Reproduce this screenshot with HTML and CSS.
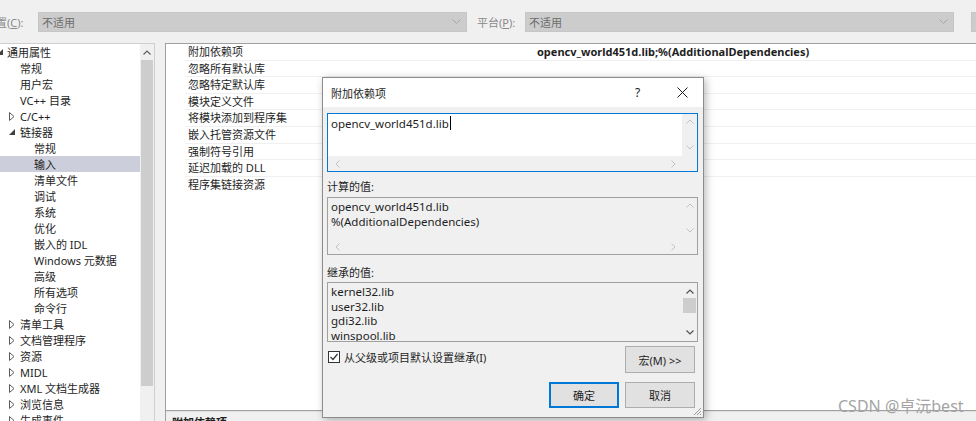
FILE: index.html
```html
<!DOCTYPE html>
<html>
<head>
<meta charset="utf-8">
<link rel="stylesheet" href="styles.css">
</head>
<body>
<div class="top">
  <span class="lbl lbl-cfg">置(<u>C</u>):</span>
  <div class="combo combo-cfg"><span>不适用</span><svg class="chev" width="9" height="5" viewBox="0 0 9 5"><polyline points="0.5,0.5 4.5,4.5 8.5,0.5" fill="none" stroke="#a6a6a6" stroke-width="1"/></svg></div>
  <span class="lbl lbl-plat">平台(<u>P</u>):</span>
  <div class="combo combo-plat"><span>不适用</span><svg class="chev" width="9" height="5" viewBox="0 0 9 5"><polyline points="0.5,0.5 4.5,4.5 8.5,0.5" fill="none" stroke="#a6a6a6" stroke-width="1"/></svg></div>
  <div class="topbtn"></div>
</div>

<div class="main">
  <div class="tree">
    <div class="tree-list">
      <div class="ti l0"><span class="exp exp0"><svg width="6" height="6" viewBox="0 0 6 6"><polygon points="6,0 6,6 0,6" fill="#404040"/></svg></span>通用属性</div>
      <div class="ti l1"><span class="exp"></span>常规</div>
      <div class="ti l1"><span class="exp"></span>用户宏</div>
      <div class="ti l1"><span class="exp"></span>VC++ 目录</div>
      <div class="ti l1"><span class="exp"><svg width="6" height="9" viewBox="0 0 6 9"><polygon points="0.5,0.5 5,4.5 0.5,8.5" fill="none" stroke="#5c5c5c" stroke-width="1"/></svg></span>C/C++</div>
      <div class="ti l1"><span class="exp"><svg width="6" height="6" viewBox="0 0 6 6"><polygon points="6,0 6,6 0,6" fill="#404040"/></svg></span>链接器</div>
      <div class="ti l2">常规</div>
      <div class="ti l2 sel">输入</div>
      <div class="ti l2">清单文件</div>
      <div class="ti l2">调试</div>
      <div class="ti l2">系统</div>
      <div class="ti l2">优化</div>
      <div class="ti l2">嵌入的 IDL</div>
      <div class="ti l2">Windows 元数据</div>
      <div class="ti l2">高级</div>
      <div class="ti l2">所有选项</div>
      <div class="ti l2">命令行</div>
      <div class="ti l1"><span class="exp"><svg width="6" height="9" viewBox="0 0 6 9"><polygon points="0.5,0.5 5,4.5 0.5,8.5" fill="none" stroke="#5c5c5c" stroke-width="1"/></svg></span>清单工具</div>
      <div class="ti l1"><span class="exp"><svg width="6" height="9" viewBox="0 0 6 9"><polygon points="0.5,0.5 5,4.5 0.5,8.5" fill="none" stroke="#5c5c5c" stroke-width="1"/></svg></span>文档管理程序</div>
      <div class="ti l1"><span class="exp"><svg width="6" height="9" viewBox="0 0 6 9"><polygon points="0.5,0.5 5,4.5 0.5,8.5" fill="none" stroke="#5c5c5c" stroke-width="1"/></svg></span>资源</div>
      <div class="ti l1"><span class="exp"><svg width="6" height="9" viewBox="0 0 6 9"><polygon points="0.5,0.5 5,4.5 0.5,8.5" fill="none" stroke="#5c5c5c" stroke-width="1"/></svg></span>MIDL</div>
      <div class="ti l1"><span class="exp"><svg width="6" height="9" viewBox="0 0 6 9"><polygon points="0.5,0.5 5,4.5 0.5,8.5" fill="none" stroke="#5c5c5c" stroke-width="1"/></svg></span>XML 文档生成器</div>
      <div class="ti l1"><span class="exp"><svg width="6" height="9" viewBox="0 0 6 9"><polygon points="0.5,0.5 5,4.5 0.5,8.5" fill="none" stroke="#5c5c5c" stroke-width="1"/></svg></span>浏览信息</div>
      <div class="ti l1"><span class="exp"><svg width="6" height="9" viewBox="0 0 6 9"><polygon points="0.5,0.5 5,4.5 0.5,8.5" fill="none" stroke="#5c5c5c" stroke-width="1"/></svg></span>生成事件</div>
    </div>
    <div class="tree-sb">
      <div class="sb-btn"><svg width="8" height="5" viewBox="0 0 8 5"><polyline points="0.5,4.5 4,1 7.5,4.5" fill="none" stroke="#606060" stroke-width="1.2"/></svg></div>
      <div class="sb-thumb"></div>
    </div>
  </div>

  <div class="grid">
    <div class="rows">
      <div class="row"><div class="gut"></div><div class="name">附加依赖项</div><div class="val bold">opencv_world451d.lib;%(AdditionalDependencies)</div></div>
      <div class="row"><div class="gut"></div><div class="name">忽略所有默认库</div><div class="val"></div></div>
      <div class="row"><div class="gut"></div><div class="name">忽略特定默认库</div><div class="val"></div></div>
      <div class="row"><div class="gut"></div><div class="name">模块定义文件</div><div class="val"></div></div>
      <div class="row"><div class="gut"></div><div class="name">将模块添加到程序集</div><div class="val"></div></div>
      <div class="row"><div class="gut"></div><div class="name">嵌入托管资源文件</div><div class="val"></div></div>
      <div class="row"><div class="gut"></div><div class="name">强制符号引用</div><div class="val"></div></div>
      <div class="row"><div class="gut"></div><div class="name">延迟加载的 DLL</div><div class="val"></div></div>
      <div class="row last"><div class="gut"></div><div class="name">程序集链接资源</div><div class="val"></div></div>
    </div>
    <div class="desc">附加依赖项</div>
  </div>
</div>

<div class="dlg">
  <div class="dlg-title">
    <span class="dlg-name">附加依赖项</span>
    <span class="help">?</span>
    <svg class="close" width="11" height="11" viewBox="0 0 11 11"><path d="M0.5,0.5 L10.5,10.5 M10.5,0.5 L0.5,10.5" stroke="#1a1a1a" stroke-width="1"/></svg>
  </div>
  <div class="dlg-body">
    <div class="box edit">
      <div class="box-text"><span>opencv_world451d.lib</span><span class="caret"></span></div>
      <div class="vsb">
        <svg width="8" height="5" viewBox="0 0 8 5"><polyline points="0.5,4.5 4,1 7.5,4.5" fill="none" stroke="#c2c2c2" stroke-width="1"/></svg>
        <svg width="8" height="5" viewBox="0 0 8 5"><polyline points="0.5,0.5 4,4 7.5,0.5" fill="none" stroke="#c2c2c2" stroke-width="1"/></svg>
      </div>
      <div class="hsb">
        <svg width="5" height="8" viewBox="0 0 5 8"><polyline points="4.5,0.5 1,4 4.5,7.5" fill="none" stroke="#c2c2c2" stroke-width="1"/></svg>
        <svg width="5" height="8" viewBox="0 0 5 8"><polyline points="0.5,0.5 4,4 0.5,7.5" fill="none" stroke="#c2c2c2" stroke-width="1"/></svg>
      </div>
      <div class="corner"></div>
    </div>

    <div class="glabel glabel1">计算的值:</div>
    <div class="box computed">
      <div class="box-text"><div>opencv_world451d.lib</div><div>%(AdditionalDependencies)</div></div>
      <div class="vsb">
        <svg width="8" height="5" viewBox="0 0 8 5"><polyline points="0.5,4.5 4,1 7.5,4.5" fill="none" stroke="#c2c2c2" stroke-width="1"/></svg>
        <svg width="8" height="5" viewBox="0 0 8 5"><polyline points="0.5,0.5 4,4 7.5,0.5" fill="none" stroke="#c2c2c2" stroke-width="1"/></svg>
      </div>
      <div class="hsb">
        <svg width="5" height="8" viewBox="0 0 5 8"><polyline points="4.5,0.5 1,4 4.5,7.5" fill="none" stroke="#c2c2c2" stroke-width="1"/></svg>
        <svg width="5" height="8" viewBox="0 0 5 8"><polyline points="0.5,0.5 4,4 0.5,7.5" fill="none" stroke="#c2c2c2" stroke-width="1"/></svg>
      </div>
      <div class="corner"></div>
    </div>

    <div class="glabel glabel2">继承的值:</div>
    <div class="box inherited">
      <div class="box-text inh-text"><div>kernel32.lib</div><div>user32.lib</div><div>gdi32.lib</div><div>winspool.lib</div></div>
      <div class="vsb2">
        <svg class="up" width="8" height="5" viewBox="0 0 8 5"><polyline points="0.5,4.5 4,1 7.5,4.5" fill="none" stroke="#505050" stroke-width="1.2"/></svg>
        <div class="thumb"></div>
        <svg class="down" width="8" height="5" viewBox="0 0 8 5"><polyline points="0.5,0.5 4,4 7.5,0.5" fill="none" stroke="#505050" stroke-width="1.2"/></svg>
      </div>
    </div>

    <div class="opt-row">
      <label class="chk"><span class="cbox"><svg width="10" height="10" viewBox="0 0 10 10"><polyline points="1.5,5 4,7.5 8.5,2" fill="none" stroke="#333" stroke-width="1.2"/></svg></span><span>从父级或项目默认设置继承(I)</span></label>
      <div class="btn">宏(M) &gt;&gt;</div>
    </div>
    <div class="btn-row">
      <div class="btn btn-def">确定</div>
      <div class="btn">取消</div>
    </div>
  </div>
  <svg class="grip" width="9" height="9" viewBox="0 0 9 9"><path d="M8,1 L1,8 M8,4 L4,8 M8,7 L7,8" stroke="#9a9a9a" stroke-width="1"/></svg>
</div>

<div class="wm">CSDN @卓沅best</div>
</body>
</html>
```

FILE: styles.css
```css
* { box-sizing: border-box; }
html, body { margin: 0; padding: 0; }
body {
  width: 976px;
  height: 421px;
  overflow: hidden;
  position: relative;
  background: #f0f0f0;
  font-family: "Noto Sans", "Noto Sans CJK SC", sans-serif;
  font-size: 11px;
  color: #1e1e1e;
}

/* top bar */
.top {
  height: 43px;
  display: flex;
  align-items: center;
  white-space: nowrap;
}
.lbl { color: #8a8a8a; flex-shrink: 0; }
.lbl-cfg { margin-left: -4px; width: 42px; }
.lbl-plat { margin-left: 10px; width: 48px; }
.combo {
  height: 20px;
  width: 429px;
  flex-shrink: 0;
  background: #cccccc;
  border: 1px solid #c6c6c6;
  display: flex;
  align-items: center;
  justify-content: space-between;
  padding: 0 5px 0 3px;
  color: #6d6d6d;
}
.topbtn {
  margin-left: 17px;
  width: 30px;
  height: 20px;
  background: #cccccc;
  border: 1px solid #c6c6c6;
  flex-shrink: 0;
}

/* main */
.main { display: flex; height: 378px; }
.tree {
  width: 155px;
  flex-shrink: 0;
  background: #fff;
  border-top: 1px solid #cfcfcf;
  border-right: 1px solid #cfcfcf;
  display: flex;
}
.tree-list { width: 140px; }
.ti {
  height: 16px;
  display: flex;
  align-items: center;
  white-space: nowrap;
}
.ti.l0 { padding-left: 0; }
.ti.l1 { padding-left: 9px; }
.ti.l2 { padding-left: 34px; }
.ti.sel { background: #cccedb; }
.exp { width: 11px; flex-shrink: 0; display: flex; align-items: center; }
.exp0 { width: 10px; margin-left: -3px; }
.tree-sb {
  width: 14px;
  background: #f0f0f0;
  display: flex;
  flex-direction: column;
  align-items: center;
}
.sb-btn { height: 16px; display: flex; align-items: center; justify-content: center; }
.sb-thumb { width: 12px; height: 326px; background: #cdcdcd; }

.grid {
  flex: 1;
  margin-left: 10px;
  border-top: 1px solid #a0a0a0;
  border-left: 1px solid #a0a0a0;
  display: flex;
  flex-direction: column;
  overflow: hidden;
}
.rows {
  height: 367px;
  flex-shrink: 0;
  background: #fff;
  border-bottom: 1px solid #a0a0a0;
}
.row { display: flex; height: 16.6px; }
.gut { width: 19px; flex-shrink: 0; }
.name {
  width: 348px;
  flex-shrink: 0;
  padding-left: 3px;
  line-height: 16px;
  border-bottom: 1px solid #f0f0f0;
  white-space: nowrap;
}
.val {
  flex: 1;
  padding-left: 4px;
  line-height: 16px;
  border-bottom: 1px solid #f0f0f0;
  white-space: nowrap;
}
.row.last .name, .row.last .val { border-bottom: none; }
.bold { font-weight: bold; }
.desc {
  flex-shrink: 0;
  padding: 3px 0 0 6px;
  line-height: 16px;
  font-weight: bold;
  border-top: 1px solid #e3e3e3;
}

/* dialog */
.dlg {
  position: absolute;
  left: 322px;
  top: 77px;
  width: 382px;
  height: 341px;
  background: #f0f0f0;
  border: 1px solid #8c8c8c;
  box-shadow: 2px 2px 8px rgba(0, 0, 0, 0.28);
  display: flex;
  flex-direction: column;
}
.dlg-title {
  height: 29px;
  background: #fff;
  display: flex;
  align-items: center;
  padding-left: 8px;
  flex-shrink: 0;
}
.dlg-name { flex: 1; }
.help { width: 10px; font-size: 12px; margin-right: 32px; color: #1a1a1a; }
.close { margin-right: 15px; }
.dlg-body {
  padding: 6px 5px 0 4px;
  display: flex;
  flex-direction: column;
}
.box {
  display: grid;
  grid-template-columns: 1fr 15px;
  grid-template-rows: 1fr 15px;
  border: 1px solid #a0a0a0;
  font-size: 11.5px;
}
.edit { height: 59px; border-color: #0078d7; }
.edit .box-text { background: #fff; }
.computed { height: 58px; }
.inherited { height: 60px; grid-template-rows: 1fr; }
.box-text {
  padding: 1px 0 0 3px;
  line-height: 15px;
  white-space: nowrap;
  overflow: hidden;
}
.edit .box-text { padding-top: 2px; display: flex; align-items: flex-start; }
.caret { display: inline-block; width: 1px; height: 14px; background: #000; margin-left: 1px; }
.inh-text { padding-top: 2px; line-height: 14.7px; }
.vsb {
  display: flex;
  flex-direction: column;
  justify-content: space-between;
  align-items: center;
  padding: 5px 0 6px;
  background: #f0f0f0;
}
.hsb {
  display: flex;
  justify-content: space-between;
  align-items: center;
  padding: 0 6px 0 7px;
  background: #f0f0f0;
}
.corner { background: #f0f0f0; }
.vsb2 {
  display: flex;
  flex-direction: column;
  align-items: center;
  background: #f0f0f0;
}
.vsb2 .up { margin-top: 6px; }
.vsb2 .thumb { width: 13px; height: 15px; background: #cdcdcd; margin-top: 4px; }
.vsb2 .down { margin-top: auto; margin-bottom: 6px; }
.glabel { line-height: 15px; }
.glabel1 { margin-top: 7px; margin-bottom: 3px; }
.glabel2 { margin-top: 10px; margin-bottom: 2px; }

.opt-row {
  display: flex;
  justify-content: space-between;
  align-items: flex-start;
  margin-top: 4px;
  margin-right: 3px;
}
.chk { display: flex; align-items: center; margin-top: 3px; margin-left: 1px; }
.cbox {
  width: 12px;
  height: 12px;
  border: 1px solid #333;
  background: #fff;
  display: flex;
  align-items: center;
  justify-content: center;
  margin-right: 4px;
}
.btn {
  width: 70px;
  height: 27px;
  background: #e1e1e1;
  border: 1px solid #adadad;
  display: flex;
  align-items: center;
  justify-content: center;
}
.btn-row {
  display: flex;
  justify-content: flex-end;
  gap: 6px;
  margin-top: 9px;
  margin-right: 3px;
}
.btn-row .btn { height: 26px; }
.btn-def { border: 2px solid #0078d7; }
.grip { position: absolute; right: 1px; bottom: 1px; }

.wm {
  position: absolute;
  left: 838px;
  top: 393px;
  font-size: 16px;
  color: #a4a4a4;
  white-space: nowrap;
}
```
